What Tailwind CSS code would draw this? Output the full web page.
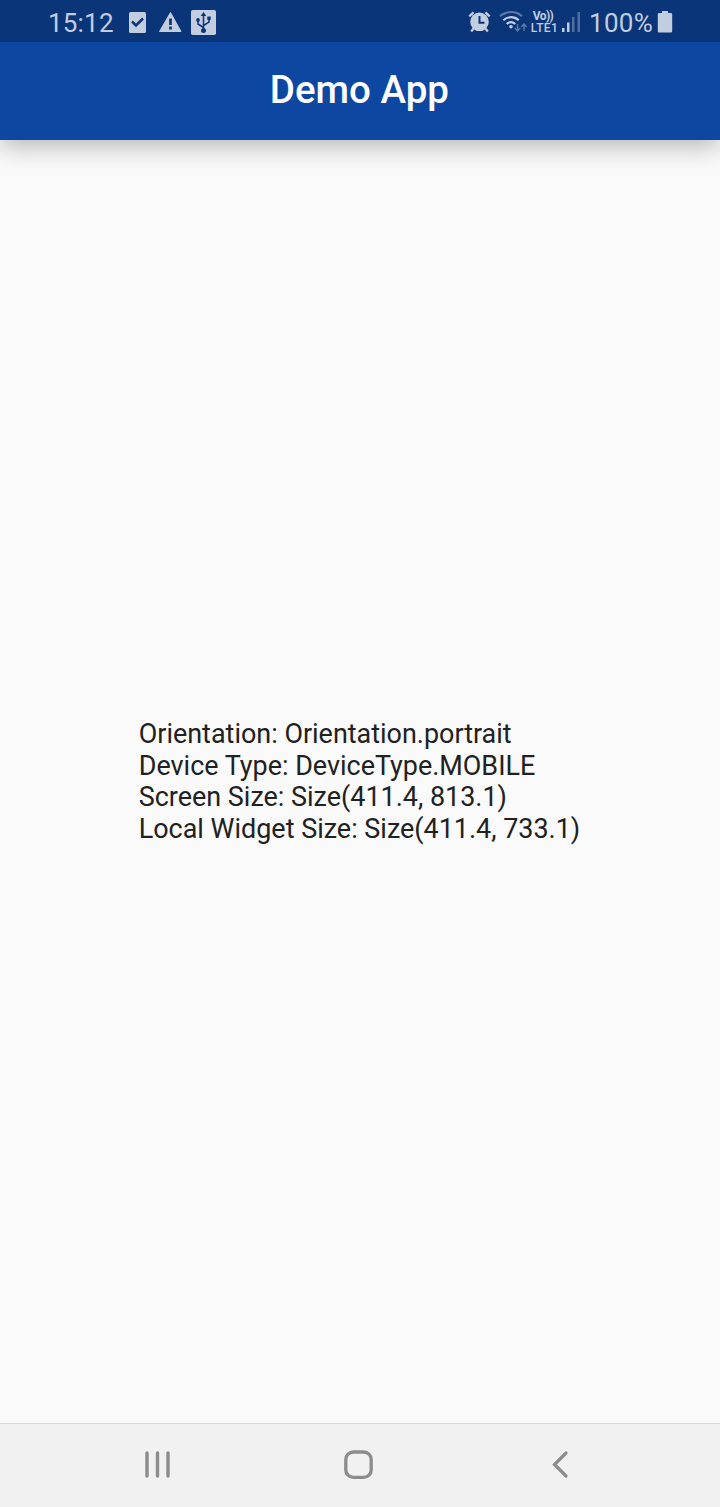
<!DOCTYPE html>
<html lang="en">
<head>
<meta charset="utf-8">
<title>Demo App</title>
<script src="https://cdn.jsdelivr.net/npm/@tailwindcss/browser@4"></script>
</head>
<body class="m-0">
<div class="flex h-[1507px] w-[720px] flex-col overflow-hidden bg-[#fafafa] font-[Roboto,sans-serif]">
  <div class="z-10 flex h-[42px] shrink-0 items-center bg-[#0a3579] pl-[48px] pr-[47px] pt-[3px] text-[#c2cde0]">
    <span class="w-[80px] whitespace-nowrap text-[26px] leading-[40px] tracking-[0.2px]">15:12</span>
    <svg class="-mt-[3px] h-[42px] w-[90px] shrink-0" viewBox="128 0 90 42" fill="none">
      <rect x="129" y="12" width="17" height="21" rx="1.5" fill="#c2cde0"/>
      <path d="M132 21.500l4 4 7-7" stroke="#0a3579" stroke-width="2.500"/>
      <path d="M170.500 12.500L181 31.500h-21.500z" fill="#c2cde0" stroke="#c2cde0" stroke-width="1" stroke-linejoin="round"/>
      <path d="M170.500 18.500v6.500M170.500 26.500v3" stroke="#0a3579" stroke-width="2.700"/>
      <rect x="191" y="10" width="25" height="25" rx="1.800" fill="#c2cde0"/>
      <path d="M203.500 30V14M203.500 27.500l-5.500-3.500v-3M203.500 25.500l5.500-3.300V18.500" stroke="#0a3579" stroke-width="1.500"/>
      <path d="M203.500 12l2.800 4h-5.600z" fill="#0a3579"/>
      <circle cx="203.500" cy="30.500" r="2.500" fill="#0a3579"/>
      <circle cx="198" cy="20" r="1.900" fill="#0a3579"/>
      <rect x="207.300" y="16.500" width="3.400" height="3.400" fill="#0a3579"/>
    </svg>
    <svg class="-mt-[3px] ml-auto h-[42px] w-[62px] shrink-0" viewBox="466 0 62 42" fill="none" stroke="#c2cde0">
      <circle cx="479.500" cy="21.800" r="9.300" fill="#c2cde0" stroke="none"/>
      <path d="M469.300 16.300l4.200-4M489.700 16.300l-4.200-4M474 28l-2.800 3.500M485 28l2.800 3.500" stroke-width="2.300"/>
      <path d="M479.500 16v6.800h5" stroke="#0a3579" stroke-width="2"/>
      <path d="M500 16.200c6.500-5.600 15.500-5.600 22 0" stroke="#5c79a7" stroke-width="2.200"/>
      <path d="M503.300 20.200c4.500-4 10.900-4 15.400 0M506.700 24c2.600-2.200 6-2.200 8.600 0" stroke-width="2.200"/>
      <circle cx="511" cy="26.800" r="1.800" fill="#c2cde0" stroke="none"/>
      <path d="M517.500 24v6.500M514.800 28l2.700 3 2.700-3M524 31v-6.500M521.300 27l2.700-3 2.700 3" stroke="#5c79a7" stroke-width="1.400"/>
    </svg>
    <div class="-mt-px flex w-[32px] shrink-0 flex-col items-center text-[12px] font-medium leading-[12px]">
      <span class="mr-[2px] whitespace-nowrap text-[12px] font-bold tracking-[-0.600px]">Vo))</span>
      <span class="ml-[1px] whitespace-nowrap pt-px leading-[11px] tracking-[0.400px]">LTE1</span>
    </div>
    <svg class="-mt-[3px] h-[42px] w-[29px] shrink-0" viewBox="560 0 29 42">
      <path d="M562 28h2.500v4H562zM567 22.500h2.500V32H567z" fill="#c2cde0"/>
      <path d="M572 17h2.500v15H572zM577.500 12h2.500v20h-2.500z" fill="#4f6d9f"/>
    </svg>
    <span class="w-[68px] shrink-0 whitespace-nowrap text-[26px] leading-[40px] tracking-[0.300px]">100%</span>
    <svg class="-mt-[3px] h-[42px] w-[16px] shrink-0" viewBox="657 0 16 42">
      <path d="M662 11h6v2h3q1.200 0 1.200 1.200v17q0 1.200-1.200 1.200h-12q-1.200 0-1.200-1.200v-17q0-1.200 1.200-1.200h3z" fill="#c2cde0"/>
    </svg>
  </div>
  <header class="z-0 flex h-[98px] shrink-0 items-center justify-center bg-[#0d47a1] pb-[2px] pr-[1.200px] shadow-[0_6px_24px_rgba(0,0,0,0.28)]">
    <h1 class="text-[38.500px] font-medium leading-[46px] text-white">Demo App</h1>
  </header>
  <main class="flex grow items-center justify-center pr-[1px] pt-[1.300px]">
    <div class="whitespace-nowrap text-[26.950px] leading-[31.580px] text-[#212121]">
      <p>Orientation: Orientation.portrait</p>
      <p>Device Type: DeviceType.MOBILE</p>
      <p>Screen Size: Size(411.4, 813.1)</p>
      <p>Local Widget Size: Size(411.4, 733.1)</p>
    </div>
  </main>
  <nav class="flex h-[84px] shrink-0 items-center justify-between border-t border-[#d6d6d6] bg-[#f1f1f1] pb-[2px] pl-[142px] pr-[144px]">
    <svg class="h-[32px] w-[32px]" viewBox="142 1449 32 32" stroke="#8c8c8c" stroke-width="3.400" stroke-linecap="round">
      <path d="M147 1453v23M157.500 1453v23M168 1453v23"/>
    </svg>
    <svg class="h-[32px] w-[32px]" viewBox="343 1449 32 32" fill="none" stroke="#8c8c8c" stroke-width="3.300">
      <rect x="345.800" y="1452" width="25.400" height="25.400" rx="7.500"/>
    </svg>
    <svg class="h-[32px] w-[32px]" viewBox="544 1449 32 32" fill="none" stroke="#8c8c8c" stroke-width="3.200" stroke-linecap="round">
      <path d="M566 1453l-11.500 11.500 11.500 11.500"/>
    </svg>
  </nav>
</div>
</body>
</html>
